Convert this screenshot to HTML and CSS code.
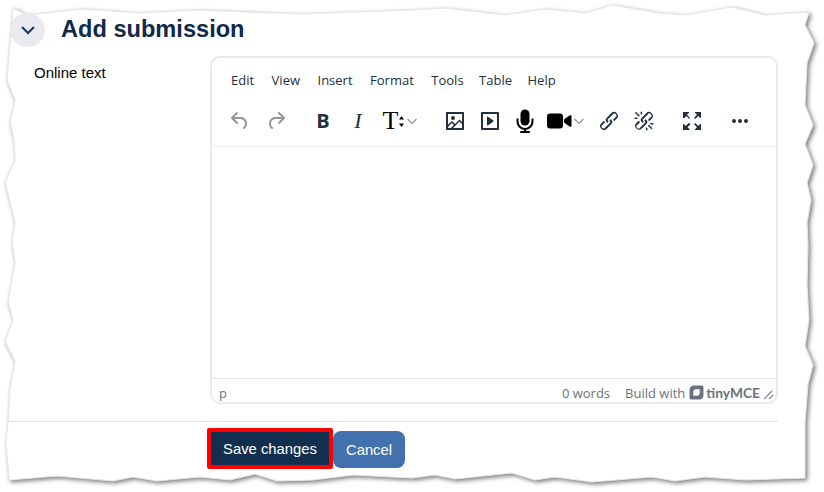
FILE: index.html
```html
<!DOCTYPE html>
<html>
<head>
  <title>Add submission</title>
  <link rel="stylesheet" href="styles.css">
</head>
<body>
<div class="sheet">
  <svg class="torn-paper" width="824" height="492" viewBox="0 0 824 492">
    <polygon points="13,8 27,15 83,9 140,13 200,10 300,14 412,10 445,8 505,15 545,9 585,13 612,5 659,13 685,15 732,7 765,15 809,12 805,25 814,43 807,63 805,105 813,125 805,144 813,165 807,183 811,200 807,223 808,245 807,285 809,320 805,346 813,365 808,384 805,422 805,478 745,480 705,477 675,481 652,477 592,482 555,477 535,480 512,473 455,479 435,475 412,478 353,475 313,480 277,481 255,474 230,480 200,477 157,481 133,477 113,481 57,476 9,480 6,442 8,422 10,389 15,361 5,341 13,320 8,302 15,262 12,242 15,222 5,182 15,160 14,140 10,122 15,100 7,80"/>
  </svg>

  <div class="section-head">
    <span class="collapse-btn">
      <svg width="16" height="16" viewBox="0 0 16 16"><path d="M2 5l6 6 6-6" fill="none" stroke="#1d3461" stroke-width="2"/></svg>
    </span>
    <h3 class="section-title">Add submission</h3>
  </div>

  <div class="form-row">
    <label class="form-label">Online text</label>
    <div class="editor">
      <div class="editor-header">
        <div class="menubar">
          <span>Edit</span><span>View</span><span>Insert</span><span>Format</span><span>Tools</span><span>Table</span><span>Help</span>
        </div>
        <div class="toolbar">
          <div class="tool-group group-history">
            <span class="tool disabled"><svg width="24" height="24" viewBox="0 0 24 24"><path d="M6.4 8H12c3.7 0 6.2 2 6.8 5.1.6 2.7-.4 5.6-2.3 6.8a1 1 0 0 1-1-1.8c1.1-.6 1.8-2.7 1.4-4.6-.5-2.1-2.1-3.5-4.9-3.5H6.4l3.3 3.3a1 1 0 1 1-1.4 1.4l-5-5a1 1 0 0 1 0-1.4l5-5a1 1 0 0 1 1.4 1.4L6.4 8Z"/></svg></span>
            <span class="tool disabled"><svg width="24" height="24" viewBox="0 0 24 24"><path d="M17.6 10H12c-2.8 0-4.4 1.4-4.9 3.5-.4 2 .3 4 1.4 4.6a1 1 0 1 1-1 1.8c-2-1.2-2.9-4.1-2.3-6.8.6-3 3-5.1 6.8-5.1h5.6l-3.3-3.3a1 1 0 1 1 1.4-1.4l5 5a1 1 0 0 1 0 1.4l-5 5a1 1 0 0 1-1.4-1.4l3.3-3.3Z"/></svg></span>
          </div>
          <div class="tool-group group-format">
            <span class="tool glyph-bold">B</span>
            <span class="tool glyph-italic">I</span>
            <span class="tool tool-split">
              <span class="glyph-size">T<svg class="size-arrows" width="5" height="11" viewBox="0 0 5 11"><path d="M2.5 0L5 3.5H0ZM2.5 11L0 7.5h5Z" fill="#000"/></svg></span>
              <svg class="chevron" width="12" height="12" viewBox="0 0 12 12"><path d="M1.5 4l4.5 4.500L10.500 4" fill="none" stroke="#8d949c" stroke-width="1.2"/></svg>
            </span>
          </div>
          <div class="tool-group group-media">
            <span class="tool"><svg width="24" height="24" viewBox="0 0 24 24"><path d="M5 15.700l3.300-3.200c.3-.3.7-.3 1 0L12 15l4.100-4c.3-.4.8-.4 1 0l2 1.900V5H5v10.700ZM5 18v1h3l2.800-2.900-2-2L5 17.900Zm14-3l-2.500-2.400-6.400 6.500H19v-4ZM4 3h16c.6 0 1 .4 1 1v16c0 .6-.4 1-1 1H4a1 1 0 0 1-1-1V4c0-.6.4-1 1-1Zm6 8a2 2 0 1 0 0-4 2 2 0 0 0 0 4Z"/></svg></span>
            <span class="tool"><svg width="24" height="24" viewBox="0 0 24 24"><path d="M4 3h16c.6 0 1 .4 1 1v16c0 .6-.4 1-1 1H4a1 1 0 0 1-1-1V4c0-.6.4-1 1-1Zm1 2v14h14V5H5Zm4.800 2.600l5.600 4a.5.5 0 0 1 0 .8l-5.600 4A.5.5 0 0 1 9 16V8a.5.5 0 0 1 .8-.4Z"/></svg></span>
            <span class="tool tool-black"><svg width="24" height="24" viewBox="0 0 24 24"><rect x="7.500" y="0.500" width="9" height="16" rx="4.500"/><path d="M4.500 9.500v3a7.500 7.500 0 0 0 15 0v-3" fill="none" stroke="#000" stroke-width="2"/><path d="M11 19h2v3.500h-2Z"/><rect x="7" y="22" width="10" height="2" rx="1"/></svg></span>
            <span class="tool tool-split tool-video">
              <svg class="tool-black" width="25" height="16" viewBox="0 0 25 16"><rect x="0" y="0.500" width="16" height="15" rx="3"/><path d="M17 6.500L22.500 2.500c1-.7 2-.2 2 1v9c0 1.200-1 1.700-2 1L17 9.500Z"/></svg>
              <svg class="chevron" width="12" height="12" viewBox="0 0 12 12"><path d="M1.500 4l4.500 4.500L10.500 4" fill="none" stroke="#8d949c" stroke-width="1.200"/></svg>
            </span>
          </div>
          <div class="tool-group group-link">
            <span class="tool"><svg width="24" height="24" viewBox="0 0 24 24"><path d="M6.200 12.300a1 1 0 0 1 1.400 1.400l-2 2a2 2 0 1 0 2.600 2.800l4.800-4.800a1 1 0 0 0 0-1.400 1 1 0 1 1 1.400-1.300 2.900 2.900 0 0 1 0 4L9.600 20a3.900 3.900 0 0 1-5.500-5.500l2-2Zm11.600-.6a1 1 0 0 1-1.400-1.400l2-2a2 2 0 1 0-2.600-2.800L11 10.300a1 1 0 0 0 0 1.400A1 1 0 1 1 9.600 13a2.900 2.900 0 0 1 0-4L14.400 4a3.900 3.900 0 0 1 5.500 5.500l-2 2Z"/></svg></span>
            <span class="tool"><svg width="24" height="24" viewBox="0 0 24 24"><path d="M6.200 12.300a1 1 0 0 1 1.400 1.400l-2.100 2a2 2 0 1 0 2.700 2.800l4.800-4.800a1 1 0 0 0 0-1.400 1 1 0 1 1 1.400-1.300 2.900 2.900 0 0 1 0 4l-4.800 4.700a3.900 3.900 0 0 1-5.500-5.500l2-2Zm11.600-.6a1 1 0 0 1-1.400-1.400l2.100-2a2 2 0 1 0-2.700-2.800L11 10.300a1 1 0 0 0 0 1.400A1 1 0 1 1 9.600 13a2.900 2.900 0 0 1 0-4L14.400 4a3.900 3.900 0 0 1 5.500 5.500l-2 2ZM7.600 6.300a.8.8 0 0 1-1 1.100L3.300 4.200a.7.7 0 1 1 1-1l3.200 3.100ZM5.100 8.600a.8.8 0 0 1 0 1.500H3a.8.8 0 0 1 0-1.500H5Zm5-3.500a.8.8 0 0 1-1.500 0V3a.8.8 0 0 1 1.500 0v2Zm6 11.800a.8.8 0 0 1 1-1l3.200 3.200a.8.8 0 0 1-1 1L16 17Zm-2.200 2a.8.8 0 0 1 1.500 0V21a.8.8 0 0 1-1.500 0V19Zm5-3.500a.7.700 0 1 1 0-1.500H21a.8.8 0 0 1 0 1.500H19Z"/></svg></span>
          </div>
          <div class="tool-group group-view">
            <span class="tool"><svg width="24" height="24" viewBox="0 0 24 24"><path d="M15.300 10l-1.200-1.300 2.900-3L15 3.700V3h6v6h-.7l-2-2-3 3ZM9.400 10l-3-3-2 2H3V3h6v.7l-2 2 2.900 3L9.400 10Zm5.900 4l3 3 2-2h.7v6h-6v-.7l2-2-2.900-3 1.200-1.300Zm-6 0l1.200 1.300-3 3 2.100 2v.7H3v-6h.7l2 2 3-3Z"/></svg></span>
          </div>
          <div class="tool-group group-more">
            <span class="tool"><svg width="24" height="24" viewBox="0 0 24 24"><path d="M6 10a2 2 0 0 0-2 2c0 1.100.9 2 2 2a2 2 0 0 0 2-2 2 2 0 0 0-2-2Zm12 0a2 2 0 0 0-2 2c0 1.100.9 2 2 2a2 2 0 0 0 2-2 2 2 0 0 0-2-2Zm-6 0a2 2 0 0 0-2 2c0 1.100.9 2 2 2a2 2 0 0 0 2-2 2 2 0 0 0-2-2Z"/></svg></span>
          </div>
        </div>
      </div>
      <div class="editor-body"></div>
      <div class="statusbar">
        <span class="status-path">p</span>
        <span class="status-words">0 words</span>
        <span class="status-brand">Build with</span>
        <svg class="brand-logo" width="15" height="15" viewBox="0 0 14 14"><path fill-rule="evenodd" d="M4.500 0.500H12c1 0 1.500.5 1.500 1.500v7.500c0 2.500-2 4-4 4H2c-1 0-1.500-.5-1.500-1.500V4.500c0-2.500 2-4 4-4ZM5.500 4L4 5.500v4.500h4.500L10 8.500V4Z"/></svg>
        <span class="brand-name">tinyMCE</span>
        <svg class="resize-handle" width="10" height="10" viewBox="0 0 10 10"><path d="M0 9L8 1M5 9L9 5" fill="none" stroke="#7b838c" stroke-width="1.100"/></svg>
      </div>
    </div>
  </div>

  <div class="form-actions">
    <button class="btn btn-save">Save changes</button>
    <button class="btn btn-cancel">Cancel</button>
  </div>
</div>
</body>
</html>
```

FILE: styles.css
```css
html, body {
  margin: 0;
  padding: 0;
  background-color: #fff;
}

.sheet {
  position: relative;
  box-sizing: border-box;
  width: 824px;
  height: 492px;
  padding: 13px 46px 0 10px;
  overflow: hidden;
  font-family: "Liberation Sans", Arial, sans-serif;
}

.torn-paper {
  position: absolute;
  top: 0;
  left: 0;
  z-index: 0;
  fill: #fff;
  stroke: #e6e6e6;
  stroke-width: 1.200px;
  stroke-linejoin: round;
  filter: drop-shadow(2.500px 2.500px 2px rgba(0, 0, 0, .5));
}

.section-head, .form-row, .form-actions {
  position: relative;
  z-index: 1;
}

.section-head {
  display: flex;
  align-items: center;
  height: 34px;
}

.collapse-btn {
  display: flex;
  align-items: center;
  justify-content: center;
  flex: 0 0 35px;
  height: 34px;
  border-radius: 50%;
  background-color: #e9e9ef;
}

.section-title {
  margin: 0 0 2px 16px;
  font-size: 23.600px;
  font-weight: bold;
  color: #0f2a4a;
}

.form-row {
  display: flex;
  margin-top: 9px;
}

.form-label {
  flex: 0 0 176px;
  padding: 8px 0 0 24px;
  font-size: 15px;
  line-height: 17px;
  color: #000;
}

.editor {
  display: flex;
  flex-direction: column;
  box-sizing: border-box;
  width: 568px;
  height: 348px;
  border: 2px solid #eaeaea;
  border-radius: 10px;
  overflow: hidden;
}

.editor-header {
  box-shadow: 0 2px 4px rgba(34, 47, 62, .08);
  height: 87px;
  position: relative;
}

.menubar {
  display: flex;
  gap: 17.500px;
  padding: 13px 0 0 19px;
  font-family: "Open Sans", sans-serif;
  font-size: 13px;
  line-height: 18px;
  color: #222f3e;
}

.menubar span:nth-child(n+6) {
  margin-left: -2px;
}

.toolbar {
  display: flex;
  margin-top: 14px;
}

.tool-group {
  display: flex;
}

.group-history {
  margin-left: 9.500px;
}

.group-history .tool {
  flex-basis: 36px;
}

.group-format {
  margin-left: 12px;
}

.group-media {
  margin-left: 14px;
}

.group-link {
  margin-left: -1px;
}

.group-view {
  margin-left: 13px;
}

.group-more {
  margin-left: 13px;
}

.tool {
  display: flex;
  flex: 0 0 35px;
  align-items: center;
  justify-content: center;
  height: 36px;
  fill: #222f3e;
  color: #222f3e;
}

.tool.disabled {
  fill: #8f969e;
}

.tool-black, .tool.tool-black {
  fill: #000;
}

.glyph-bold {
  box-sizing: border-box;
  padding-bottom: 2px;
  font-family: "Open Sans", sans-serif;
  font-size: 20px;
  font-weight: bold;
}

.glyph-italic {
  font-family: "Liberation Serif", serif;
  font-style: italic;
  font-size: 22px;
}

.tool-split {
  flex-basis: 48px;
  justify-content: flex-start;
}

.glyph-size {
  display: flex;
  align-items: center;
  margin-left: 7px;
  font-family: "Liberation Serif", serif;
  font-size: 26px;
  color: #000;
}

.size-arrows {
  margin-left: 1px;
}

.chevron {
  margin-left: 2px;
}

.tool-video {
  flex-basis: 50px;
  padding-left: 4px;
  box-sizing: border-box;
}

.tool-video .chevron {
  margin-left: 1px;
}

.editor-body {
  flex: 1;
}

.statusbar {
  display: flex;
  align-items: center;
  box-sizing: border-box;
  height: 24px;
  border-top: 1px solid #e4e4e4;
  padding: 4px 2px 0 7px;
  font-family: "Open Sans", sans-serif;
  font-size: 13px;
  color: #6a737d;
}

.status-path {
  margin-right: auto;
}

.status-brand {
  margin-left: 15px;
}

.brand-logo {
  margin-left: 4px;
  fill: #6a737d;
}

.brand-name {
  margin-left: 2px;
  font-family: "Lato", sans-serif;
  font-size: 13.800px;
  font-weight: bold;
}

.resize-handle {
  margin-left: 4px;
  margin-top: 4px;
}

.form-actions {
  display: flex;
  align-items: center;
  width: 571px;
  margin: 17px 0 0 -2px;
  padding: 6px 0 0 199px;
  border-top: 1px solid #dedede;
}

.btn {
  border: 0;
  color: #fff;
  font-family: "Liberation Sans", Arial, sans-serif;
  font-size: 14.800px;
  padding: 0;
}

.btn-save {
  box-sizing: border-box;
  width: 126px;
  height: 41px;
  border: 4px solid #f00;
  background-color: #132f50;
  border-radius: 2px;
}

.btn-cancel {
  width: 72px;
  height: 37px;
  margin-top: 2px;
  background-color: #4272ad;
  border-radius: 8px;
}
```
